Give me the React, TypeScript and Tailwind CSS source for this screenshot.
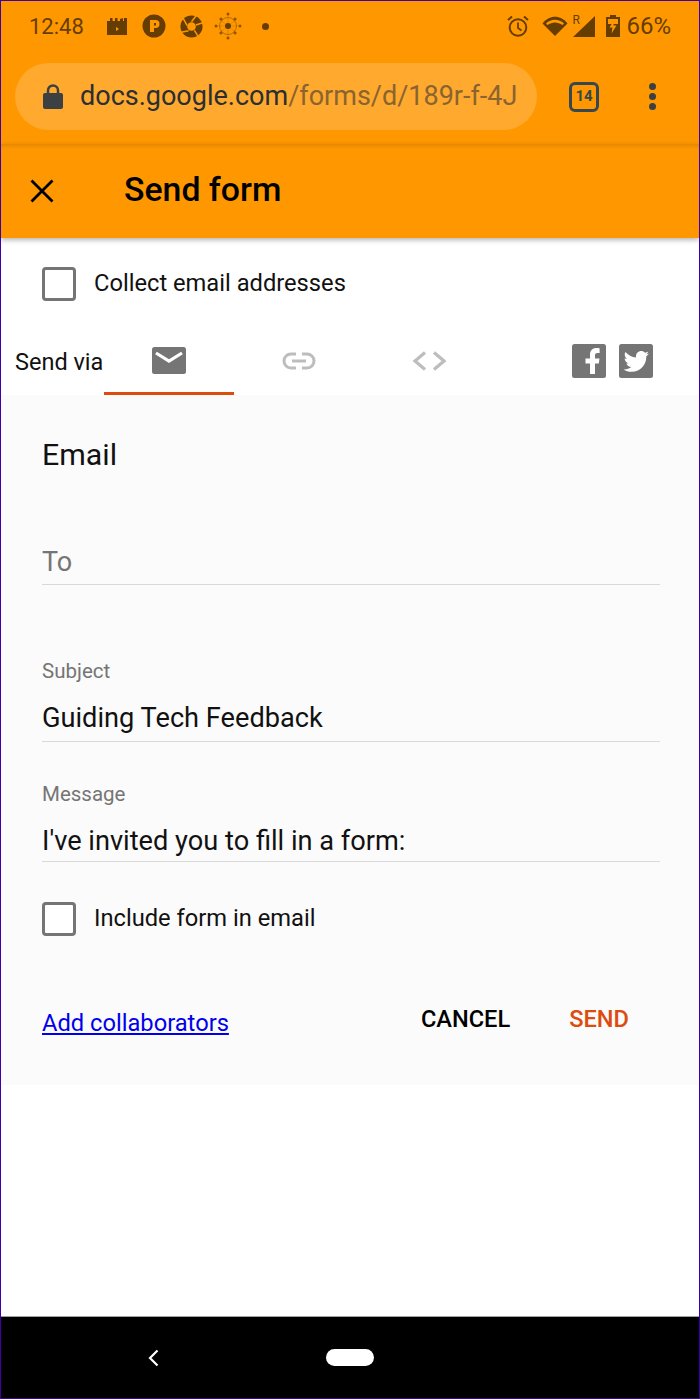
import React from "react";

const brown = "#663d00";

// --- status bar icons ---
const ClapperIcon = () => (
  <svg width="20" height="17" viewBox="0 0 20 17">
    <path fill={brown} d="M0 3h3V0h2.500v3H8V0h2.500v3H13V1l3-1v3h1V0h3v17H0z" />
    <path fill="#ff9800" d="M9 9l3 2-3 2z" />
  </svg>
);

const PandoraIcon = () => (
  <svg width="24" height="24" viewBox="0 0 24 24">
    <circle cx="12" cy="12" r="11.500" fill={brown} />
    <path fill="#ff9800" d="M8 6h5.500a4 4 0 0 1 0 8H12v4H8z" />
    <rect x="12" y="9" width="2" height="2.500" fill={brown} />
  </svg>
);

const ShutterIcon = () => (
  <svg width="23" height="23" viewBox="0 0 24 24">
    <circle cx="12" cy="12" r="11.500" fill={brown} />
    <g stroke="#ff9800" strokeWidth="1.600">
      <path d="M12 7L17 .5" />
      <path d="M16.500 10.500L24 8" />
      <path d="M15 16l4.500 7" />
      <path d="M9 16.500L1 18" />
      <path d="M7.500 11L3 3" />
    </g>
    <circle cx="12" cy="12" r="4.500" fill="#ff9800" />
  </svg>
);

const OrbitIcon = () => (
  <svg width="28" height="28" viewBox="0 0 28 28" fill="none">
    <circle cx="14" cy="14" r="8.500" stroke={brown} strokeWidth="0.800" opacity="0.6" />
    <path d="M1 14h26M14 1v26M5 7l18 14M23 7L5 21" stroke={brown} strokeWidth="0.500" opacity="0.35" />
    <circle cx="14" cy="14" r="3" fill={brown} />
    <g fill={brown} opacity="0.7">
      <circle cx="14" cy="2" r="1.500" />
      <circle cx="14" cy="26" r="1.500" />
      <circle cx="2" cy="14" r="1.500" />
      <circle cx="26" cy="14" r="1.500" />
      <circle cx="7" cy="7" r="1.500" />
      <circle cx="21" cy="7" r="1.500" />
      <circle cx="7" cy="21" r="1.500" />
      <circle cx="21" cy="21" r="1.500" />
    </g>
  </svg>
);

const AlarmIcon = () => (
  <svg width="22" height="22" viewBox="0 0 22 22" fill="none" stroke={brown}>
    <circle cx="11" cy="12.500" r="8.300" strokeWidth="2" />
    <path d="M11 7.500v5.500l3.500 2.500" strokeWidth="1.800" />
    <path d="M1 5l4-3.500M21 5l-4-3.500" strokeWidth="2" />
  </svg>
);

const WifiIcon = () => (
  <svg width="26" height="20" viewBox="0 0 26 20">
    <path d="M0.500 7.500C7-1.500 19-1.500 25.500 7.500L13 20z" fill={brown} />
    <path d="M4 7.500C9 2.500 17 2.500 22 7.500L20.500 9C16 5.500 10 5.500 5.500 9z" fill="#ff9800" />
  </svg>
);

const SignalIcon = () => (
  <svg width="22" height="21" viewBox="0 0 22 21">
    <path d="M22 0v21H0z" fill={brown} />
  </svg>
);

const BatteryIcon = () => (
  <svg width="14" height="22" viewBox="0 0 14 22">
    <path d="M4 0h6v2h4v20H0V2h4z" fill={brown} />
    <path d="M2 4h10v5H2z" fill="#ff9800" />
    <path d="M8 5L3.500 12.500H6.500L5.500 18.500L10.500 10.500H7.500z" fill="#ff9800" />
  </svg>
);

// --- share tab icons ---
const MailIcon = () => (
  <svg width="34" height="27" viewBox="0 0 34 27">
    <rect width="34" height="27" rx="2.500" fill="#757575" />
    <path d="M4 6l13 8 13-8" fill="none" stroke="#fff" strokeWidth="3.200" />
  </svg>
);

const LinkIcon = () => (
  <svg width="34" height="18" viewBox="0 0 34 18" fill="none" stroke="#bdbdbd">
    <path d="M14 2H9a7 7 0 0 0 0 14h5M20 2h5a7 7 0 0 1 0 14h-5" strokeWidth="3" />
    <path d="M10 9h14" strokeWidth="3" />
  </svg>
);

const CodeIcon = () => (
  <svg width="34" height="20" viewBox="0 0 34 20" fill="none" stroke="#bdbdbd" strokeWidth="3.200">
    <path d="M13 1.500L3 10l10 8.500" />
    <path d="M22 1.500L32 10l-10 8.500" />
  </svg>
);

const FacebookIcon = () => (
  <svg width="34" height="34" viewBox="0 0 34 34">
    <rect width="34" height="34" rx="2.500" fill="#757575" />
    <path
      fill="#fff"
      d="M18 30V19.500h-4.500V14.500H18v-4C18 6.500 20.500 4 24.500 4c1.600 0 2.600.1 3.100.2V9h-2.100c-2 0-2.500 1-2.500 2.500v3h4.500l-.7 5H23V30z"
    />
  </svg>
);

const TwitterIcon = () => (
  <svg width="34" height="34" viewBox="0 0 34 34">
    <rect width="34" height="34" rx="2.500" fill="#757575" />
    <path
      fill="#fff"
      d="M30 9.500c-1 .4-2 .7-3 .8 1.100-.6 1.900-1.700 2.300-2.900-1 .6-2.100 1-3.300 1.300-1-1-2.300-1.700-3.800-1.700-2.900 0-5.200 2.300-5.200 5.200 0 .4 0 .8.100 1.200C12.800 13.200 9 11.100 6.400 8c-.4.800-.7 1.700-.7 2.600 0 1.800.9 3.400 2.300 4.300-.9 0-1.700-.3-2.400-.6 0 2.500 1.800 4.600 4.200 5.100-.8.200-1.600.2-2.400.1.700 2 2.600 3.500 4.900 3.600-2.400 1.800-5.100 2.600-7.800 2.300 2.300 1.500 5 2.300 8 2.300 9.600 0 14.800-7.900 14.800-14.800v-.7c1-.7 1.900-1.700 2.700-2.700z"
    />
  </svg>
);

const Checkbox = () => (
  <span className="block w-[34px] h-[34px] shrink-0 rounded-[4px] border-[3px] border-[#757575] bg-white" />
);

const Field = ({ label, value, valueClass }: { label: string; value: string; valueClass: string }) => (
  <div className="mr-[39px] border-b border-[#d9d9d9]">
    <div className="h-[24px] text-[20.500px] leading-[24px] text-[#757575]">{label}</div>
    <div className={`mt-[14px] text-[27.200px] leading-[43px] text-[#111111] ${valueClass}`}>{value}</div>
  </div>
);

export default function App() {
  return (
    <div className="w-[700px] h-[1399px] flex flex-col overflow-hidden border border-[#3f00a5] bg-white font-['Roboto',sans-serif]">
      {/* status bar + url bar */}
      <div className="h-[143px] shrink-0 bg-[#ff9800]">
        <div className="h-[50px] flex items-center pl-[28px] pr-[28px] text-[#663d00]">
          <span className="text-[22px] w-[78px]">12:48</span>
          <ClapperIcon />
          <span className="ml-[15px]"><PandoraIcon /></span>
          <span className="ml-[14px]"><ShutterIcon /></span>
          <span className="ml-[11px]"><OrbitIcon /></span>
          <span className="ml-[20px] block w-[7px] h-[7px] rounded-full bg-[#663d00]" />
          <span className="ml-auto"><AlarmIcon /></span>
          <span className="ml-[13px]"><WifiIcon /></span>
          <span className="relative ml-[5px]">
            <SignalIcon />
            <span className="absolute left-[-1px] top-[-3px] text-[12px] leading-[14px]">R</span>
          </span>
          <span className="ml-[11px]"><BatteryIcon /></span>
          <span className="ml-[6px] text-[24px]">66%</span>
        </div>
        <div className="flex items-center mt-[12px] pl-[14px]">
          <div className="w-[522px] h-[67px] flex items-center rounded-full bg-[#ffa92f] pl-[28px]">
            <svg width="20" height="25" viewBox="0 0 20 25" className="shrink-0">
              <path d="M5 10V6.500a5 5 0 0 1 10 0V10" fill="none" stroke="#3c4043" strokeWidth="2.500" />
              <rect y="9" width="20" height="16" rx="2" fill="#3c4043" />
            </svg>
            <div className="ml-[17px] text-[27px] whitespace-nowrap text-[#2b2f33]">
              docs.google.com<span className="text-[#8a6430]">/forms/d/189r-f-4J</span>
            </div>
          </div>
          <div className="ml-[32px] w-[30px] h-[30px] flex items-center justify-center rounded-[6px] border-[3px] border-[#37474f] text-[15px] font-bold text-[#37474f]">
            14
          </div>
          <div className="ml-[50px] flex flex-col gap-[3px]">
            <span className="block w-[7px] h-[7px] rounded-full bg-[#3c4043]" />
            <span className="block w-[7px] h-[7px] rounded-full bg-[#3c4043]" />
            <span className="block w-[7px] h-[7px] rounded-full bg-[#3c4043]" />
          </div>
        </div>
      </div>

      {/* toolbar */}
      <div className="relative z-10 h-[94px] shrink-0 flex items-center bg-[#ff9800] shadow-[0_2px_5px_rgba(0,0,0,0.3),inset_0_4px_4px_-2px_rgba(0,0,0,0.12)]">
        <svg width="24" height="24" viewBox="0 0 24 24" className="ml-[29px]" fill="none" stroke="#000" strokeWidth="2.800">
          <path d="M1.500 1.500l21 21M22.500 1.500l-21 21" />
        </svg>
        <h1 className="ml-[70px] pb-[2px] text-[33.800px] font-medium text-black">Send form</h1>
      </div>

      {/* main */}
      <div className="flex-1 flex flex-col">
        <div className="h-[92px] shrink-0 flex items-center pl-[41px]">
          <Checkbox />
          <span className="ml-[18px] text-[23.700px] text-[#111111]">Collect email addresses</span>
        </div>

        <div className="h-[65px] shrink-0 flex items-start pl-[14px]">
          <span className="w-[89px] mt-[16px] text-[23.500px] leading-[32px] text-[#111111]">Send via</span>
          <div className="w-[130px] h-[65px] flex justify-center pt-[17px] border-b-[3px] border-[#dd4b0f]">
            <MailIcon />
          </div>
          <div className="ml-[48px] mt-[22px]"><LinkIcon /></div>
          <div className="ml-[96px] mt-[21px]"><CodeIcon /></div>
          <div className="ml-[126px] mt-[14px]"><FacebookIcon /></div>
          <div className="ml-[13px] mt-[14px]"><TwitterIcon /></div>
        </div>

        <div className="h-[690px] shrink-0 bg-[#fbfbfb] pl-[41px] pt-[42px]">
          <h2 className="h-[36px] text-[30.300px] leading-[36px] text-[#111111]">Email</h2>

          <div className="mt-[69px] mr-[39px] h-[43px] border-b border-[#d9d9d9] text-[27px] leading-[40px] text-[#757575]">
            To
          </div>

          <div className="mt-[74px]">
            <Field label="Subject" value="Guiding Tech Feedback" valueClass="h-[44px]" />
          </div>
          <div className="mt-[40px]">
            <Field label="Message" value="I've invited you to fill in a form:" valueClass="h-[41px]" />
          </div>

          <div className="mt-[39px] flex items-center">
            <Checkbox />
            <span className="ml-[18px] text-[23.700px] text-[#111111]">Include form in email</span>
          </div>

          <div className="mt-[67px] flex items-start">
            <a href="#" className="mt-[4px] text-[23.700px] leading-[30px] text-[#0000ee] underline">
              Add collaborators
            </a>
            <button className="ml-[192px] text-[23.600px] leading-[30px] font-medium text-black">CANCEL</button>
            <button className="ml-[59px] text-[23.600px] leading-[30px] font-medium text-[#dd4b0f]">SEND</button>
          </div>
        </div>

        <div className="flex-1" />
      </div>

      {/* nav bar */}
      <div className="h-[82px] shrink-0 flex items-center bg-black border-t border-[#9e9e9e]">
        <svg width="12" height="18" viewBox="0 0 12 18" fill="none" stroke="#fff" strokeWidth="2.200" className="ml-[146px]">
          <path d="M10.500 1.500L3 9l7.500 7.500" />
        </svg>
        <span className="ml-[167px] block w-[48px] h-[17px] rounded-full bg-white" />
      </div>
    </div>
  );
}
